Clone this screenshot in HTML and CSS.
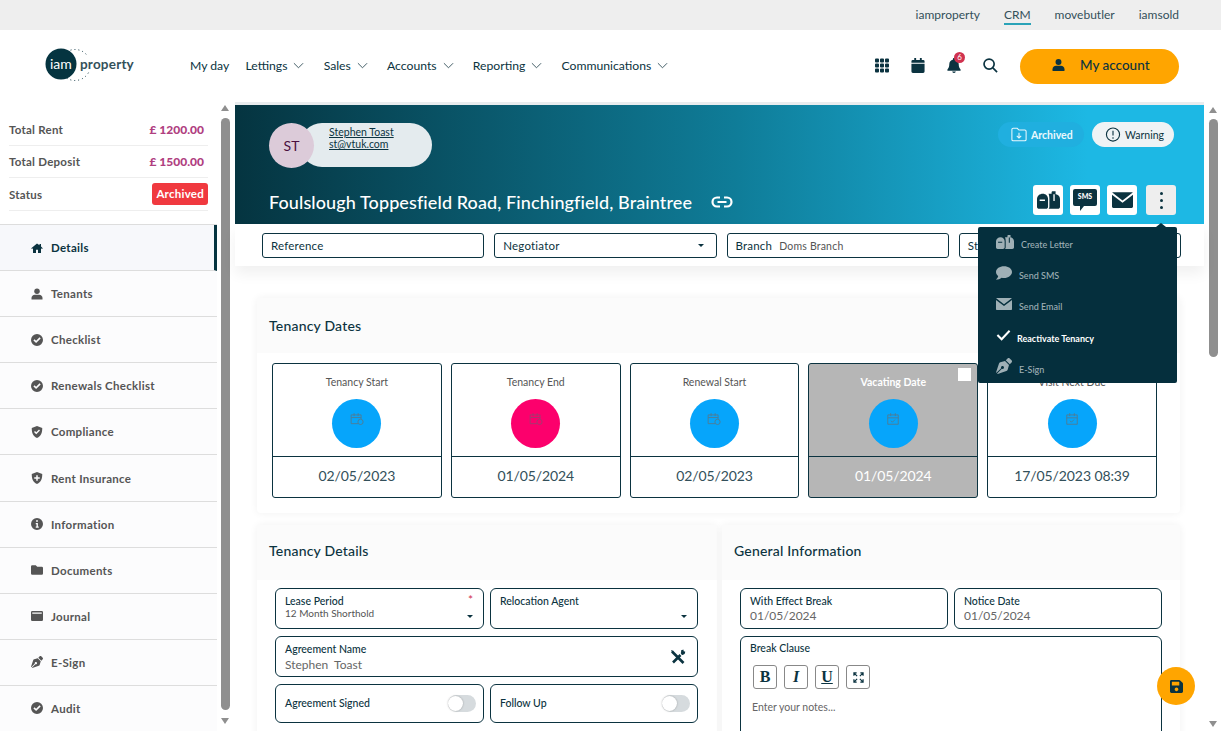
FILE: index.html
```html
<!DOCTYPE html>
<html lang="en">
<head>
<meta charset="utf-8">
<title>Tenancy</title>
<link rel="stylesheet" href="styles.css">
</head>
<body>
<svg class="sprite" aria-hidden="true">
  <symbol id="i-home" viewBox="0 0 24 24"><path d="M12 3 0.5 12.6l1.4 1.6L4 12.5V22h6v-6.500h4V22h6v-9.500l2.100 1.700 1.400-1.600L20 9.200V4h-3v2.700z"/></symbol>
  <symbol id="i-user" viewBox="0 0 24 24"><circle cx="12" cy="6.500" r="5.500"/><path d="M1 23v-3c0-4 3-6.500 6.500-6.500h9c3.500 0 6.500 2.500 6.500 6.500v3z"/></symbol>
  <symbol id="i-check" viewBox="0 0 24 24"><path fill-rule="evenodd" d="M12 0a12 12 0 1 0 0 24 12 12 0 0 0 0-24zm-1.800 18.200-5.400-5.400 2.300-2.300 3.100 3.100 6.900-6.900 2.300 2.300z"/></symbol>
  <symbol id="i-shield" viewBox="0 0 24 24"><path fill-rule="evenodd" d="M12 0 1.500 4c0 9 2 16.500 10.500 20 8.500-3.500 10.500-11 10.500-20zm-1.500 16.500-4.500-4.500 2-2 2.500 2.500 5.500-5.500 2 2z"/></symbol>
  <symbol id="i-shield-plus" viewBox="0 0 24 24"><path fill-rule="evenodd" d="M12 0 1.500 4c0 9 2 16.500 10.500 20 8.500-3.500 10.500-11 10.500-20zm-1.500 6.500h3v4h4v3h-4v4h-3v-4h-4v-3h4z"/></symbol>
  <symbol id="i-info" viewBox="0 0 24 24"><path fill-rule="evenodd" d="M12 0a12 12 0 1 0 0 24 12 12 0 0 0 0-24zm-1.800 4.500h3.600v3.200h-3.600zM9.500 10h4.300v7H15.500v2.500h-6V17h1.500v-4.500H9.500z"/></symbol>
  <symbol id="i-folder" viewBox="0 0 24 24"><path d="M2.500 2.500h7l3 3h9A2.500 2.500 0 0 1 24 8v11a2.500 2.500 0 0 1-2.500 2.500h-19A2.500 2.500 0 0 1 0 19V5a2.500 2.500 0 0 1 2.500-2.500z"/></symbol>
  <symbol id="i-journal" viewBox="0 0 24 24"><path fill-rule="evenodd" d="M2.500 2h19A2.500 2.500 0 0 1 24 4.500v15a2.500 2.500 0 0 1-2.500 2.500h-19A2.500 2.500 0 0 1 0 19.500v-15A2.500 2.500 0 0 1 2.500 2zM2.500 5v2.500h19V5z"/></symbol>
  <symbol id="i-nib" viewBox="0 0 512 512"><path d="M136.600 138.790a64.003 64.003 0 0 0-43.310 41.350L0 460l14.690 14.690L164.800 324.580c-2.990-6.260-4.800-13.180-4.800-20.580 0-26.510 21.490-48 48-48s48 21.490 48 48-21.490 48-48 48c-7.400 0-14.320-1.810-20.580-4.800L37.310 497.310 52 512l279.860-93.290a64.003 64.003 0 0 0 41.350-43.310L416 224 288 96l-151.400 42.790zm361.340-64.620l-60.110-60.110c-18.750-18.750-49.160-18.750-67.910 0l-56.550 56.550 128.020 128.020 56.550-56.550c18.750-18.750 18.750-49.150 0-67.910z"/></symbol>
  <symbol id="i-save" viewBox="0 0 448 512"><path d="M433.941 129.941l-83.882-83.882A48 48 0 0 0 316.118 32H48C21.490 32 0 53.490 0 80v352c0 26.510 21.490 48 48 48h352c26.510 0 48-21.490 48-48V163.882a48 48 0 0 0-14.059-33.941zM224 416c-35.346 0-64-28.654-64-64 0-35.346 28.654-64 64-64s64 28.654 64 64c0 35.346-28.654 64-64 64zm96-304.520V212c0 6.627-5.373 12-12 12H76c-6.627 0-12-5.373-12-12V108c0-6.627 5.373-12 12-12h228.520c3.183 0 6.235 1.264 8.485 3.515l3.480 3.480A11.996 11.996 0 0 1 320 111.480z"/></symbol>
  <symbol id="i-letter" viewBox="0 0 26 20"><path fill-rule="evenodd" d="M6.500 3C3 3 0 5.500 0 9v8.500C0 19 1 20 2.500 20H10c1.500 0 2.500-1 2.500-2.500V9c0-3.500-2.500-6-6-6zM3 9.500h6V11H3z"/><path d="M13 3h3.500V1.500C16.500.6 17.100 0 18 0h3v3.500h-2.500V11h1.500V3.300c3.600.2 6 2.500 6 5.700v8.500c0 1.500-1 2.500-2.500 2.500H13c.7-.6 1-1.500 1-2.500V9c0-2.500-.3-4.500-1-6z"/></symbol>
  <symbol id="i-mail" viewBox="0 0 24 18"><path d="M1.500 0h21c.6 0 1 .2 1.200.5L12 9.500.3.500C.5.200.9 0 1.500 0zM0 3l12 9 12-9v13.500c0 .9-.6 1.500-1.500 1.500h-21C.6 18 0 17.400 0 16.500z"/></symbol>
  <symbol id="i-bubble" viewBox="0 0 24 20"><path d="M12 0C5.500 0 0 3.500 0 8.500c0 2.500 1.400 4.500 3.300 6C3 16.500 1.500 18.500 0 20c3 0 6.500-1 8.500-2.800 1.100.2 2.300.3 3.500.3 6.500 0 12-4 12-9S18.500 0 12 0z"/></symbol>
  <symbol id="i-cal-small" viewBox="0 0 24 24"><path fill="none" stroke="currentColor" stroke-width="1.600" d="M3 5h18v16H3zM3 10h18M8 2v5M16 2v5M8.500 15l2.500 2.500 4.500-4.500"/></symbol>
  <symbol id="i-cal-clock" viewBox="0 0 24 24"><path fill="none" stroke="currentColor" stroke-width="1.600" d="M14 20H2V5h17v7M2 9.500h17M7 2v5M14 2v5"/><circle cx="18" cy="17" r="4.500" fill="none" stroke="currentColor" stroke-width="1.600"/></symbol>
</svg>

<div class="topbar">
  <a class="toplink">iamproperty</a>
  <a class="toplink active">CRM</a>
  <a class="toplink">movebutler</a>
  <a class="toplink">iamsold</a>
</div>

<header class="header">
  <div class="logo">
    <svg class="logo-mark" viewBox="0 0 46 34">
      <circle cx="30" cy="17" r="15.500" fill="none" stroke="#0b3340" stroke-width="1" stroke-dasharray="1 3"/>
      <circle cx="16" cy="16" r="15.500" fill="#053440"/>
    </svg>
    <span class="logo-iam">iam</span>
    <span class="logo-word">property</span>
  </div>
  <nav class="nav">
    <a class="nav-item nav-first">My day</a>
    <a class="nav-item">Lettings <svg class="chev" viewBox="0 0 12 7"><path d="M1 1l5 5 5-5"/></svg></a>
    <a class="nav-item">Sales <svg class="chev" viewBox="0 0 12 7"><path d="M1 1l5 5 5-5"/></svg></a>
    <a class="nav-item">Accounts <svg class="chev" viewBox="0 0 12 7"><path d="M1 1l5 5 5-5"/></svg></a>
    <a class="nav-item">Reporting <svg class="chev" viewBox="0 0 12 7"><path d="M1 1l5 5 5-5"/></svg></a>
    <a class="nav-item">Communications <svg class="chev" viewBox="0 0 12 7"><path d="M1 1l5 5 5-5"/></svg></a>
  </nav>
  <div class="tools">
    <svg class="tool-icon" viewBox="0 0 14 14"><path d="M0 1a1 1 0 0 1 1-1h2a1 1 0 0 1 1 1v2a1 1 0 0 1-1 1H1a1 1 0 0 1-1-1zM5 1a1 1 0 0 1 1-1h2a1 1 0 0 1 1 1v2a1 1 0 0 1-1 1H6a1 1 0 0 1-1-1zM10 1a1 1 0 0 1 1-1h2a1 1 0 0 1 1 1v2a1 1 0 0 1-1 1h-2a1 1 0 0 1-1-1zM0 6a1 1 0 0 1 1-1h2a1 1 0 0 1 1 1v2a1 1 0 0 1-1 1H1a1 1 0 0 1-1-1zM5 6a1 1 0 0 1 1-1h2a1 1 0 0 1 1 1v2a1 1 0 0 1-1 1H6a1 1 0 0 1-1-1zM10 6a1 1 0 0 1 1-1h2a1 1 0 0 1 1 1v2a1 1 0 0 1-1 1h-2a1 1 0 0 1-1-1zM0 11a1 1 0 0 1 1-1h2a1 1 0 0 1 1 1v2a1 1 0 0 1-1 1H1a1 1 0 0 1-1-1zM5 11a1 1 0 0 1 1-1h2a1 1 0 0 1 1 1v2a1 1 0 0 1-1 1H6a1 1 0 0 1-1-1zM10 11a1 1 0 0 1 1-1h2a1 1 0 0 1 1 1v2a1 1 0 0 1-1 1h-2a1 1 0 0 1-1-1z"/></svg>
    <svg class="tool-icon" viewBox="0 0 14 16"><path d="M3 0h2v2h4V0h2v2h1.500A1.500 1.500 0 0 1 14 3.500V5H0V3.500A1.500 1.500 0 0 1 1.500 2H3zM0 6h14v8.500a1.500 1.500 0 0 1-1.500 1.500h-11A1.500 1.500 0 0 1 0 14.500z"/></svg>
    <span class="bell">
      <svg class="tool-icon" viewBox="0 0 14 16"><path d="M7 0c.7 0 1.200.5 1.200 1.200v.6C10.500 2.300 12 4.200 12 6.500c0 3.500 1 4.700 2 5.800V13.500H0v-1.200c1-1.100 2-2.300 2-5.800 0-2.300 1.500-4.200 3.800-4.700v-.6C5.800.5 6.300 0 7 0zM5 14.500h4A2 2 0 0 1 7 16a2 2 0 0 1-2-1.500z"/></svg>
      <span class="badge">6</span>
    </span>
    <svg class="tool-icon search" viewBox="0 0 16 16"><circle cx="6.500" cy="6.500" r="5.400"/><path d="M10.500 10.500 15 15"/></svg>
    <button class="account"><svg class="account-icon"><use href="#i-user"/></svg><span>My account</span></button>
  </div>
</header>

<div class="shell">
  <aside class="sidebar">
    <div class="summary">
      <div class="sum-row"><span>Total Rent</span><b>£ 1200.00</b></div>
      <div class="sum-row"><span>Total Deposit</span><b>£ 1500.00</b></div>
      <div class="sum-row sum-status"><span>Status</span><em class="status">Archived</em></div>
    </div>
    <ul class="menu">
      <li class="menu-item current"><svg><use href="#i-home"/></svg>Details</li>
      <li class="menu-item"><svg><use href="#i-user"/></svg>Tenants</li>
      <li class="menu-item"><svg><use href="#i-check"/></svg>Checklist</li>
      <li class="menu-item"><svg><use href="#i-check"/></svg>Renewals Checklist</li>
      <li class="menu-item"><svg><use href="#i-shield"/></svg>Compliance</li>
      <li class="menu-item"><svg><use href="#i-shield-plus"/></svg>Rent Insurance</li>
      <li class="menu-item"><svg><use href="#i-info"/></svg>Information</li>
      <li class="menu-item"><svg><use href="#i-folder"/></svg>Documents</li>
      <li class="menu-item"><svg><use href="#i-journal"/></svg>Journal</li>
      <li class="menu-item"><svg><use href="#i-nib"/></svg>E-Sign</li>
      <li class="menu-item"><svg><use href="#i-check"/></svg>Audit</li>
    </ul>
  </aside>
  <div class="scrollbar side-scroll"><i class="arrow-up"></i><i class="thumb"></i><i class="arrow-down"></i></div>

  <main class="main">
    <section class="banner">
      <div class="banner-top">
        <div class="contact">
          <span class="avatar">ST</span>
          <span class="contact-pill"><a>Stephen Toast</a><a>st@vtuk.com</a></span>
        </div>
        <div class="chips">
          <span class="chip chip-blue">
            <svg viewBox="0 0 18 16"><path d="M1 13.500V2.500A1.500 1.500 0 0 1 2.500 1H7l2 2h6.500A1.500 1.500 0 0 1 17 4.500v9a1.500 1.500 0 0 1-1.500 1.500h-13A1.500 1.500 0 0 1 1 13.500zM9 6v6M6.500 9.500 9 12l2.500-2.500"/></svg>
            Archived
          </span>
          <span class="chip chip-light">
            <svg viewBox="0 0 16 16"><circle cx="8" cy="8" r="7"/><path d="M8 4v5M8 11v1.500"/></svg>
            Warning
          </span>
        </div>
      </div>
      <div class="banner-bottom">
        <h1 class="title">Foulslough Toppesfield Road, Finchingfield, Braintree
          <svg class="link-icon" viewBox="0 0 22 12"><path d="M9 1.500H6a4.500 4.500 0 0 0 0 9h3M13 1.500h3a4.500 4.500 0 0 1 0 9h-3M6.500 6h9"/></svg>
        </h1>
        <div class="actions">
          <span class="action"><svg class="a-letter"><use href="#i-letter"/></svg></span>
          <span class="action sms-action">
            <svg class="a-sms" viewBox="0 0 24 22"><path d="M2 0h20a2 2 0 0 1 2 2v13a2 2 0 0 1-2 2H11l-4 5v-5H2a2 2 0 0 1-2-2V2a2 2 0 0 1 2-2z"/></svg>
            <span class="sms-text">SMS</span>
          </span>
          <span class="action"><svg class="a-mail"><use href="#i-mail"/></svg></span>
          <span class="action action-more"><i></i><i></i><i></i></span>
        </div>
      </div>
    </section>

    <section class="filters">
      <div class="filter">Reference</div>
      <div class="filter">Negotiator<i class="caret"></i></div>
      <div class="filter">Branch<span class="filter-value">Doms Branch</span></div>
      <div class="filter">Status</div>
    </section>

    <section class="panels">
      <article class="card">
        <h2 class="card-head">Tenancy Dates</h2>
        <div class="dates">
          <div class="date"><div class="date-top"><span>Tenancy Start</span><b class="disc"><svg><use href="#i-cal-clock"/></svg></b></div><div class="date-val">02/05/2023</div></div>
          <div class="date"><div class="date-top"><span>Tenancy End</span><b class="disc disc-pink"><svg><use href="#i-cal-clock"/></svg></b></div><div class="date-val">01/05/2024</div></div>
          <div class="date"><div class="date-top"><span>Renewal Start</span><b class="disc"><svg><use href="#i-cal-clock"/></svg></b></div><div class="date-val">02/05/2023</div></div>
          <div class="date date-off"><i class="tick"></i><div class="date-top"><span>Vacating Date</span><b class="disc"><svg><use href="#i-cal-small"/></svg></b></div><div class="date-val">01/05/2024</div></div>
          <div class="date"><div class="date-top"><span>Visit Next Due</span><b class="disc"><svg><use href="#i-cal-small"/></svg></b></div><div class="date-val">17/05/2023 08:39</div></div>
        </div>
      </article>

      <div class="card-pair">
        <article class="card">
          <h2 class="card-head">Tenancy Details</h2>
          <div class="form">
            <div class="field"><label>Lease Period</label><span class="val-small">12 Month Shorthold</span><i class="req">*</i><i class="caret"></i></div>
            <div class="field"><label>Relocation Agent</label><i class="caret"></i></div>
            <div class="field wide"><label>Agreement Name</label><span class="val">Stephen&nbsp; Toast</span>
              <svg class="wrench" viewBox="0 0 16 16"><path d="M2 2.500 13.500 14"/><path d="M14 2.500 11.500 5M10.500 6 3 13.500" /><path class="thin" d="M1 1 3.500 2 3 3 2 3.500zM11 1.500c1-.7 2-.8 3-.5l-1.500 1.500 1 1L15 2c.3 1 .2 2-.5 3-.8.8-2 1-3 .5z"/></svg>
            </div>
            <div class="field toggle-field"><label>Agreement Signed</label><i class="toggle"></i></div>
            <div class="field toggle-field"><label>Follow Up</label><i class="toggle"></i></div>
          </div>
        </article>
        <article class="card">
          <h2 class="card-head">General Information</h2>
          <div class="form form-info">
            <div class="field"><label>With Effect Break</label><span class="val val-date">01/05/2024</span></div>
            <div class="field"><label>Notice Date</label><span class="val val-date">01/05/2024</span></div>
            <div class="field wide editor">
              <label>Break Clause</label>
              <div class="editor-tools">
                <span class="ed-btn serif">B</span>
                <span class="ed-btn serif ital">I</span>
                <span class="ed-btn serif under">U</span>
                <span class="ed-btn"><svg viewBox="0 0 12 12"><path d="M1 4V1h3M8 1h3v3M11 8v3H8M4 11H1V8M1 1l3.500 3.500M11 1 7.500 4.500M11 11 7.500 7.500M1 11l3.500-3.500"/></svg></span>
              </div>
              <p class="placeholder">Enter your notes...</p>
            </div>
          </div>
        </article>
      </div>
    </section>
  </main>

  <div class="scrollbar page-scroll"><i class="arrow-up"></i><i class="thumb"></i><i class="arrow-down"></i></div>

  <div class="popup">
    <i class="popup-caret"></i>
    <div class="pop-item"><svg class="pi-letter"><use href="#i-letter"/></svg><span>Create Letter</span></div>
    <div class="pop-item"><svg class="pi-bubble"><use href="#i-bubble"/></svg><span>Send SMS</span></div>
    <div class="pop-item"><svg class="pi-mail"><use href="#i-mail"/></svg><span>Send Email</span></div>
    <div class="pop-item pop-active"><svg class="pi-check" viewBox="0 0 16 12"><path d="M1.500 6 6 10.500 14.500 1.500"/></svg><span>Reactivate Tenancy</span></div>
    <div class="pop-item"><svg class="pi-nib"><use href="#i-nib"/></svg><span>E-Sign</span></div>
  </div>
  <button class="fab"><svg><use href="#i-save"/></svg></button>
</div>
</body>
</html>
```

FILE: styles.css
```css
* { box-sizing: border-box; }
html, body { margin: 0; height: 100%; overflow: hidden; }
body { font-family: "Lato", "Liberation Sans", sans-serif; color: #0b3340; background: #fff; width: 1221px; height: 731px; }
.sprite { display: none; }
svg { display: block; fill: currentColor; }
i { display: block; font-style: normal; }

.topbar { height: 30px; background: #eeeeee; display: flex; justify-content: flex-end; align-items: center; gap: 24px; padding-right: 42px; font-size: 12px; color: #33505a; }
.toplink { position: relative; line-height: 30px; }
.toplink.active::after { content: ""; position: absolute; left: 0; right: 0; bottom: 5px; height: 2px; background: #2aa3b8; }

.header { height: 72px; background: #fff; display: flex; align-items: center; padding: 0 42px 2px 45px; position: relative; }
.logo { width: 145px; height: 34px; position: relative; display: flex; align-items: center; flex: none; }
.logo-mark { width: 46px; height: 34px; position: absolute; left: 0; top: 0; }
.logo-iam { position: absolute; left: 5px; top: 7px; color: #fff; font-size: 14px; }
.logo-word { position: absolute; left: 34px; top: 8px; font-size: 13.500px; font-weight: 700; color: #33505a; background: #fff; line-height: 16px; padding: 0 1px; letter-spacing: .2px; }
.nav { display: flex; align-items: center; gap: 19.200px; font-size: 12.200px; color: #0b3340; }
.nav-item { display: flex; align-items: center; gap: 6px; white-space: nowrap; }
.nav-first { margin-right: -3px; }
.chev { width: 11px; height: 7px; fill: none; stroke: #33505a; stroke-width: 1; }
.tools { margin-left: auto; display: flex; align-items: center; gap: 22px; }
.tool-icon { width: 14px; height: 15px; fill: #0b3340; }
.bell { position: relative; display: block; }
.badge { position: absolute; left: 7px; top: -6px; width: 11px; height: 11px; border-radius: 50%; background: #d0324f; color: #fff; font-size: 8px; line-height: 11px; text-align: center; }
.search { width: 15px; height: 15px; fill: none; stroke: #0b3340; stroke-width: 1.800; }
.account { width: 159px; height: 35px; margin-top: 2px; border: 0; border-radius: 18px; background: #ffa500; color: #0b3340; font: 500 13.500px "Lato", sans-serif; display: flex; align-items: center; gap: 15px; padding: 0 0 2px 32px; }
.account-icon { width: 13px; height: 14px; }

.shell { display: flex; height: 629px; position: relative; overflow: hidden; }
.sidebar { width: 217px; flex: none; background: #fff; }
.summary { padding: 12px 9px 0; height: 122px; }
.sum-row { height: 32px; display: flex; justify-content: space-between; align-items: center; border-bottom: 1px solid #eeeeee; font-size: 11.500px; font-weight: 700; color: #555; letter-spacing: .25px; }
.sum-row b { color: #b0407f; font-size: 12px; padding-right: 4px; letter-spacing: 0; }
.sum-status { height: 33px; }
.status { font-style: normal; background: #f0393f; color: #fff; border-radius: 3px; height: 22px; line-height: 22px; padding: 0 4px; font-size: 11.500px; }
.menu { list-style: none; margin: 0; padding: 0; border-top: 1px solid #dddddd; }
.menu-item { height: 46.100px; border-bottom: 1px solid #dddddd; display: flex; align-items: center; padding-left: 31px; gap: 8px; font-size: 11.500px; font-weight: 700; color: #555; background: #fcfcfd; letter-spacing: .3px; }
.menu-item svg { width: 12px; height: 12px; fill: #555; flex: none; }
.menu-item.current { background: #f7f8fb; color: #0b3340; border-right: 3px solid #053440; }
.menu-item.current svg { fill: #0b3340; }

.scrollbar { flex: none; width: 10px; display: flex; flex-direction: column; align-items: center; }
.side-scroll { margin: 3px 3px 0 3px; }
.page-scroll { margin: 5px 3px 0 4px; }
.thumb { width: 9px; background: #8f8f8f; border-radius: 5px; }
.side-scroll .thumb { height: 592px; margin: 7px 0 8px; }
.page-scroll .thumb { height: 238px; margin: 6px 0 364px; }
.arrow-up { width: 0; height: 0; border: 4.500px solid transparent; border-top: 0; border-bottom: 6px solid #8f8f8f; }
.arrow-down { width: 0; height: 0; border: 4.500px solid transparent; border-bottom: 0; border-top: 6px solid #8f8f8f; }

.main { width: 969px; flex: none; margin-left: 2px; border-top: 3px solid #e9ecee; }
.banner { height: 119px; background: linear-gradient(90deg, #053440 0%, #0f7d99 52%, #1db8e4 88%); padding: 18px 28px 0 34px; display: flex; flex-direction: column; justify-content: space-between; color: #fff; }
.banner-top { display: flex; justify-content: space-between; }
.contact { display: flex; height: 45px; }
.avatar { width: 45px; height: 45px; border-radius: 50%; background: #dccbd9; color: #4a1040; font-size: 14px; display: flex; align-items: center; justify-content: center; position: relative; z-index: 1; flex: none; }
.contact-pill { margin-left: -14px; width: 132px; height: 44px; border-radius: 22px; background: #e4ebee; color: #0b3340; font-size: 10.500px; line-height: 12px; padding: 3px 0 0 29px; display: flex; flex-direction: column; }
.contact-pill a { text-decoration: underline; }
.chips { display: flex; gap: 8px; height: 25px; margin: -1px 2px 0 0; }
.chip { height: 25px; border-radius: 13px; display: flex; align-items: center; gap: 4px; font-size: 10.500px; font-weight: 700; }
.chip svg { width: 16px; height: 15px; fill: none; stroke-width: 1.200; }
.chip-blue { width: 86px; padding-left: 13px; background: #20afdf; color: #eaf8fd; }
.chip-blue svg { stroke: #eaf8fd; }
.chip-light { width: 82px; padding-left: 13px; background: #eef3f5; color: #0b3340; font-weight: 400; }
.chip-light svg { stroke: #0b3340; }
.banner-bottom { display: flex; justify-content: space-between; align-items: flex-end; padding-bottom: 9px; }
.title { margin: 0; font-size: 18px; font-weight: 500; display: flex; align-items: center; gap: 19px; white-space: nowrap; position: relative; top: -2px; letter-spacing: .1px; }
.link-icon { width: 22px; height: 12px; fill: none; stroke: #fff; stroke-width: 2.200; }
.actions { display: flex; gap: 7px; }
.action { width: 30px; height: 30px; background: #fff; border-radius: 3px; display: flex; align-items: center; justify-content: center; color: #0b3340; position: relative; }
.a-letter { width: 23px; height: 18px; }
.a-sms { width: 24px; height: 22px; }
.sms-text { position: absolute; left: 0; right: 0; top: 7px; text-align: center; font-size: 7px; font-weight: 900; color: #fff; }
.a-mail { width: 21px; height: 16px; }
.action-more { background: #eeeeee; margin-left: 2px; flex-direction: column; gap: 4px; }
.action-more i { width: 3px; height: 3px; border-radius: 50%; background: #0b3340; }

.filters { height: 42px; display: flex; gap: 10px; padding: 9px 23px 0 27px; background: #fff; box-shadow: 0 8px 14px rgba(0,0,0,.06); position: relative; }
.filter { flex: 1; height: 25px; border: 1px solid #0b3340; border-radius: 3px; display: flex; align-items: center; padding: 0 8px; font-size: 11.500px; position: relative; letter-spacing: .2px; }
.filter-value { margin-left: 7px; font-size: 10.500px; color: #555; }
.caret { position: absolute; right: 12px; width: 0; height: 0; border: 3px solid transparent; border-bottom: 0; border-top: 3.500px solid #0b3340; }

.panels { padding: 32px 24px 0 22px; display: flex; flex-direction: column; gap: 12px; }
.card { background: #fff; box-shadow: 0 0 8px rgba(0,0,0,.06); border-radius: 4px; }
.card-head { margin: 0; height: 55px; background: #fbfbfb; padding: 0 0 0 12px; font-size: 14px; font-weight: 500; line-height: 56px; letter-spacing: .2px; color: #0b3340; }
.card-pair .card-head { line-height: 52px; }
.dates { display: grid; grid-template-columns: repeat(5, 1fr); gap: 9px; padding: 10px 23px 15px 15px; }
.date { height: 135px; border: 1px solid #0b3340; border-radius: 3px; position: relative; display: flex; flex-direction: column; }
.date-top { height: 93px; border-bottom: 1px solid #0b3340; display: flex; flex-direction: column; align-items: center; padding-top: 12px; font-size: 10.500px; color: #555; gap: 10px; }
.date-top span { line-height: 13px; }
.date-val { flex: 1; display: flex; align-items: center; justify-content: center; font-size: 14px; color: #33505a; padding-bottom: 4px; letter-spacing: -.1px; }
.disc { width: 49px; height: 49px; border-radius: 50%; background: #06a5fb; display: flex; align-items: center; justify-content: center; color: #4f7d96; }
.disc svg { width: 14px; height: 14px; position: relative; top: -5px; }
.disc-pink { background: #fc006c; color: #a03a70; }
.date-off { background: #b6b6b6; }
.date-off .date-top { color: #fff; font-weight: 700; }
.date-off .date-val { color: #fff; }
.tick { position: absolute; right: 6px; top: 4px; width: 13px; height: 13px; background: #fff; }

.card-pair { display: grid; grid-template-columns: 460px 458px; gap: 5px; }
.form { display: grid; grid-template-columns: 209px 208px; gap: 7px 6px; padding: 8px 0 0 18px; }
.form-info { grid-template-columns: 208px 208px; }
.field { height: 41px; border: 1px solid #0b3340; border-radius: 6px; padding: 6px 9px 0; position: relative; font-size: 10.500px; display: flex; flex-direction: column; }
.field label { line-height: 12px; font-weight: 500; color: #0b3340; }
.val-small { font-size: 10px; line-height: 13px; color: #555; }
.val { font-size: 12px; color: #666; line-height: 15px; margin-top: 2px; }
.val-date { margin-top: 1px; }
.wide { grid-column: 1 / 3; }
.req { position: absolute; right: 10px; top: 3px; color: #d0324f; font-size: 12px; }
.field .caret { bottom: 10px; right: 10px; }
.wrench { position: absolute; right: 11px; top: 12px; width: 16px; height: 16px; fill: none; stroke: #0b3340; stroke-width: 2.600; }
.wrench .thin { fill: #0b3340; stroke: none; }
.toggle-field { height: 39px; flex-direction: row; align-items: center; padding-top: 0; padding-bottom: 2px; }
.toggle { position: absolute; right: 7px; top: 10px; width: 28px; height: 17px; border-radius: 9px; background: #d6dbde; }
.toggle::before { content: ""; position: absolute; left: 0; top: 1px; width: 15px; height: 15px; border-radius: 50%; background: #fff; box-shadow: 0 0 2px rgba(0,0,0,.3); }
.editor { height: 120px; padding-top: 5px; }
.editor-tools { display: flex; gap: 7px; margin: 11px 0 0 3px; }
.ed-btn { width: 24px; height: 24px; border: 1px solid #888; border-radius: 3px; display: flex; align-items: center; justify-content: center; font-size: 14px; color: #0b3340; }
.ed-btn svg { width: 11px; height: 11px; fill: none; stroke: #0b3340; stroke-width: 1.300; }
.serif { font-family: "Liberation Serif", serif; font-weight: 700; font-size: 16px; }
.ital { font-style: italic; }
.under { text-decoration: underline; }
.placeholder { margin: 12px 0 0 2px; font-size: 10.500px; color: #666; }

.popup { position: absolute; left: 978px; top: 125px; width: 199px; height: 156px; background: #052f3d; border-radius: 2px; color: #9fb0b6; font-size: 9px; padding-top: 2px; z-index: 5; }
.popup-caret { position: absolute; right: 11px; top: -4px; width: 0; height: 0; border: 5px solid transparent; border-top: 0; border-bottom: 4px solid #052f3d; }
.pop-item { height: 31.200px; display: flex; align-items: center; padding-left: 18px; gap: 7px; font-weight: 500; }
.pop-item svg { fill: #9fb0b6; flex: none; position: relative; top: -3px; }
.pi-letter { width: 18px; height: 14px; }
.pi-bubble { width: 16px; height: 14px; }
.pi-mail { width: 16px; height: 12px; }
.pi-nib { width: 16px; height: 16px; }
.pop-active { color: #fff; font-weight: 700; gap: 6px; }
.pi-check { width: 15px; height: 12px; fill: none !important; stroke: #fff; stroke-width: 2.200; }
.fab { position: absolute; left: 1157px; top: 565px; width: 38px; height: 38px; border: 0; border-radius: 50%; background: #ffa500; display: flex; align-items: center; justify-content: center; padding: 0; z-index: 4; color: #0b3340; }
.fab svg { width: 13px; height: 15px; }
```
